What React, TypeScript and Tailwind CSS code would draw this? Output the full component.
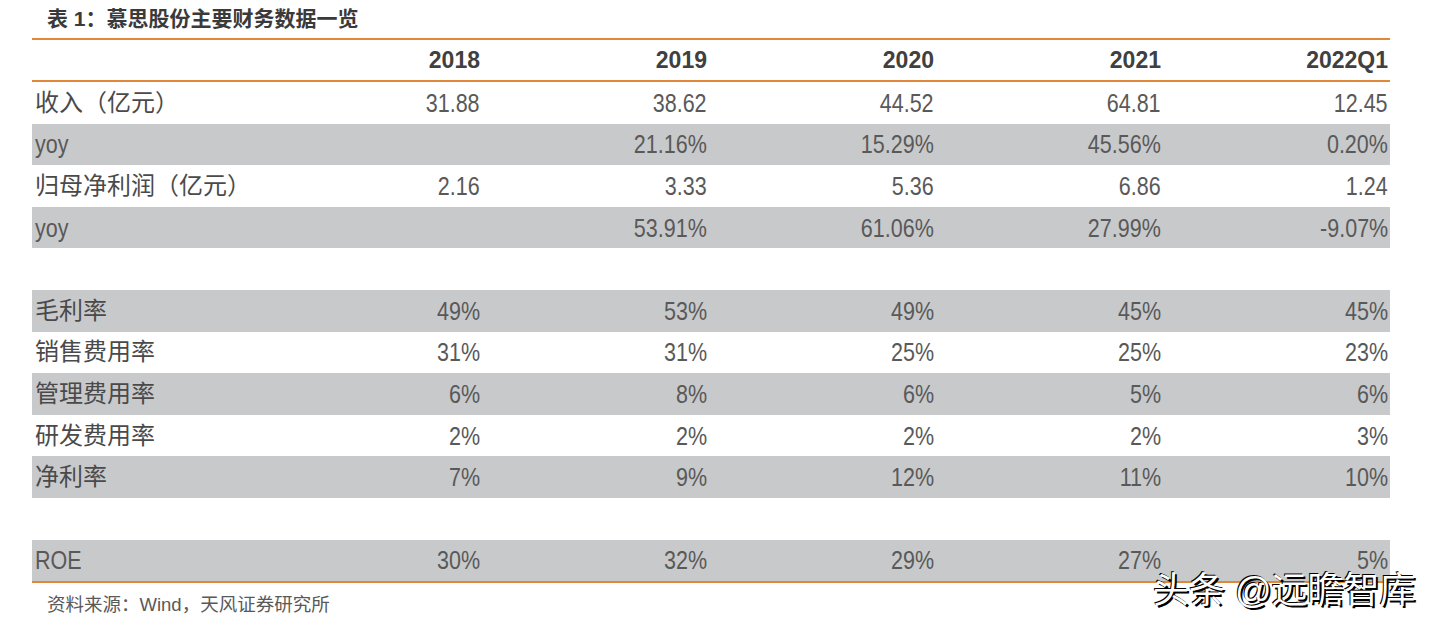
const years = ['2018', '2019', '2020', '2021', '2022Q1'];

type Row = { label: string; values: string[]; gray?: boolean; latin?: boolean } | null;

const rows: Row[] = [
  { label: '收入（亿元）', values: ['31.88', '38.62', '44.52', '64.81', '12.45'] },
  { label: 'yoy', values: ['', '21.16%', '15.29%', '45.56%', '0.20%'], gray: true, latin: true },
  { label: '归母净利润（亿元）', values: ['2.16', '3.33', '5.36', '6.86', '1.24'] },
  { label: 'yoy', values: ['', '53.91%', '61.06%', '27.99%', '-9.07%'], gray: true, latin: true },
  null,
  { label: '毛利率', values: ['49%', '53%', '49%', '45%', '45%'], gray: true },
  { label: '销售费用率', values: ['31%', '31%', '25%', '25%', '23%'] },
  { label: '管理费用率', values: ['6%', '8%', '6%', '5%', '6%'], gray: true },
  { label: '研发费用率', values: ['2%', '2%', '2%', '2%', '3%'] },
  { label: '净利率', values: ['7%', '9%', '12%', '11%', '10%'], gray: true },
  null,
  { label: 'ROE', values: ['30%', '32%', '29%', '27%', '5%'], gray: true, latin: true },
];

const cols = 'grid grid-cols-[222px_repeat(5,227px)]';

export default function App() {
  return (
    <div className="relative w-[1434px] h-[629px] bg-white text-[#595959] font-['Liberation_Sans','Noto_Sans_CJK_SC',sans-serif]">
      <div className="pt-[5px] pl-[47px] h-[38px] text-[21px] font-bold leading-[27px] text-[#3a3a3a]">
        表 1：慕思股份主要财务数据一览
      </div>
      <div className="ml-[32px] w-[1358px]">
        <div className={`${cols} h-[44px] items-center border-y-2 border-[#e0873a] text-[23px] font-bold text-[#404040]`}>
          <div />
          {years.map((y) => (
            <div key={y} className="text-right pr-[1px]">{y}</div>
          ))}
        </div>
        {rows.map((r, i) =>
          r ? (
            <div
              key={i}
              className={`${cols} h-[41.6px] items-center ${r.gray ? 'bg-[#c8c9cb]' : ''}`}
            >
              {r.latin ? (
                <div className="pl-[3px] text-[25px] leading-[30px]">
                  <span className="inline-block origin-left scale-x-[0.86]">{r.label}</span>
                </div>
              ) : (
                <div className="pl-[3px] whitespace-nowrap text-[24px] text-[#4a4a4a]">{r.label}</div>
              )}
              {r.values.map((v, j) => (
                <div key={j} className="text-right pr-[1px] text-[25px] leading-[30px]">
                  <span className="inline-block origin-right scale-x-[0.86]">{v}</span>
                </div>
              ))}
            </div>
          ) : (
            <div key={i} className="h-[41.6px]" />
          )
        )}
        <div className="h-[2px] bg-[#e0873a]" />
      </div>
      <div className="pl-[47px] pt-[8px] text-[18.5px] text-[#595959]">资料来源：Wind，天风证券研究所</div>
      <div className="absolute left-[1153px] top-[568px] text-[36px] leading-[46px] text-white [text-shadow:2px_2px_0_#000,-1px_-1px_0_#000]">
        头条 @远瞻智库
      </div>
    </div>
  );
}
